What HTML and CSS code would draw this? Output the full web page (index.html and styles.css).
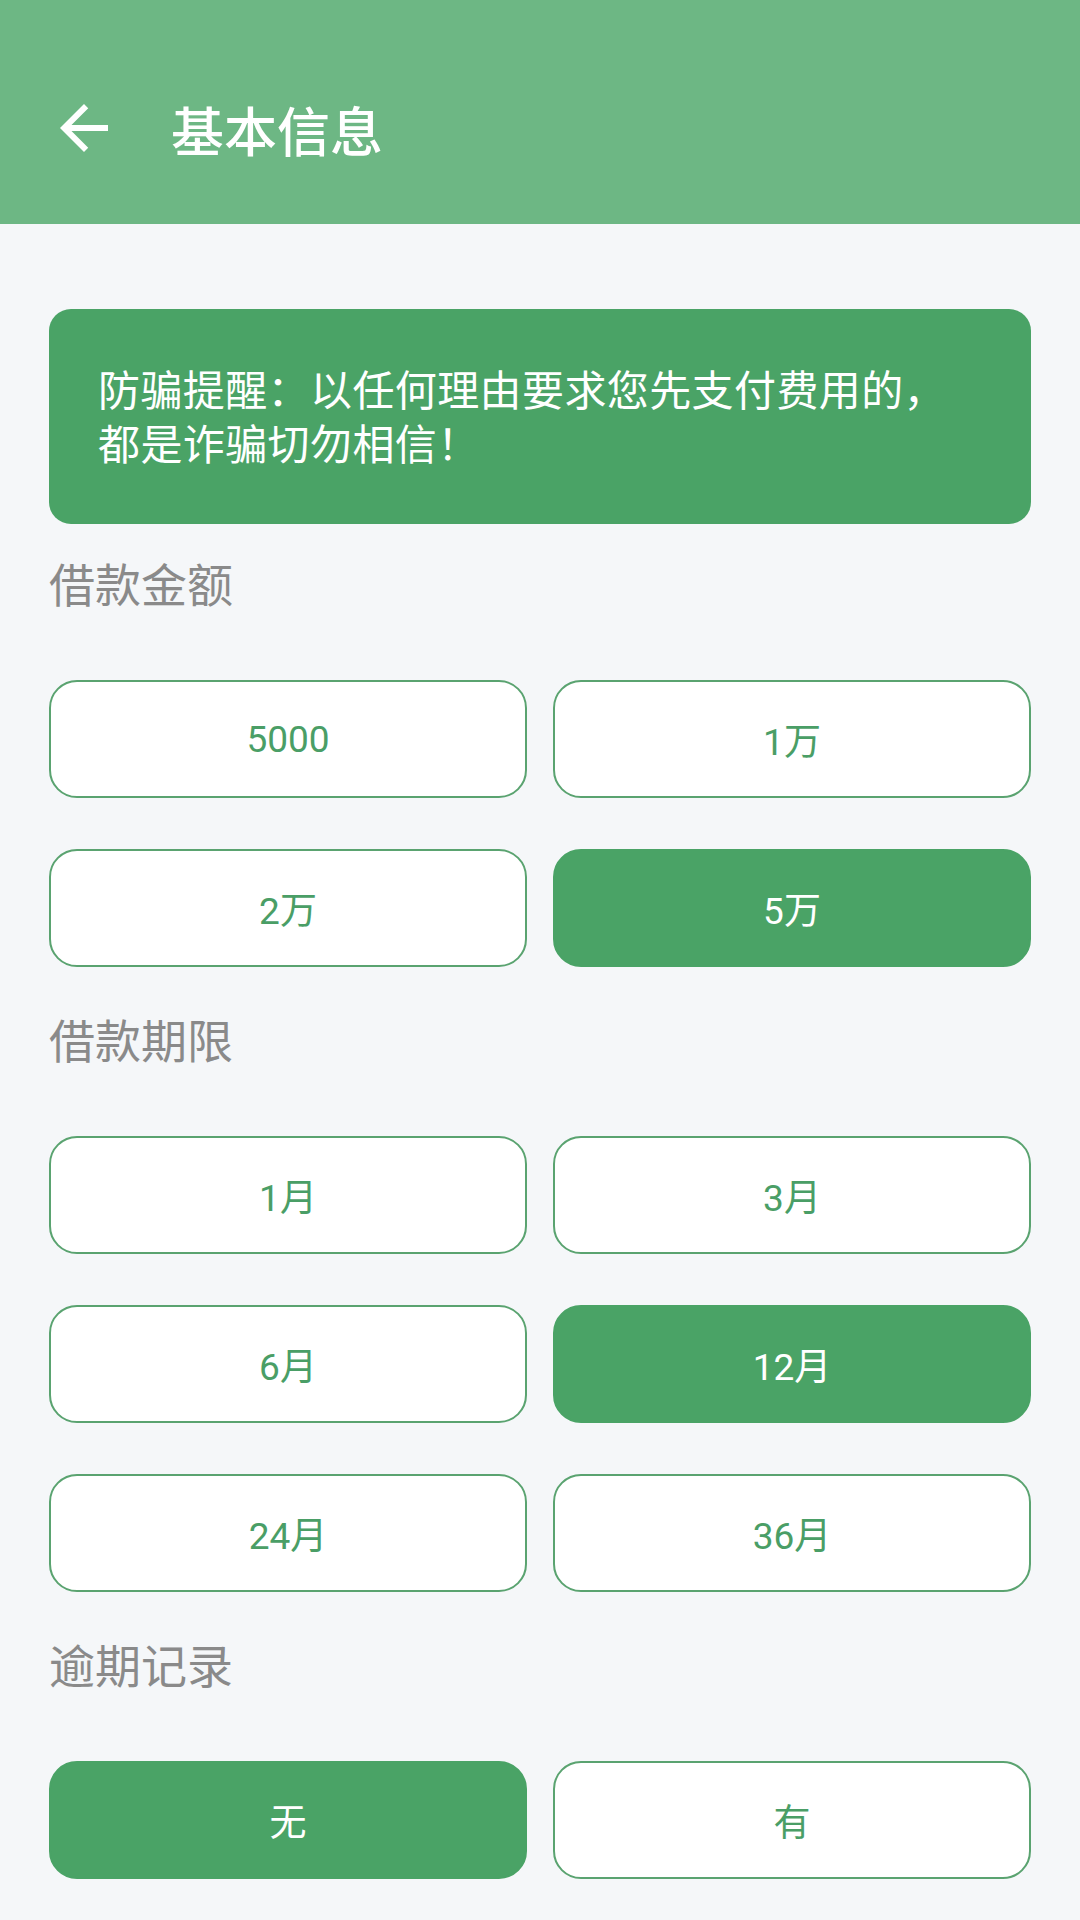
FILE: index.html
```html
<!DOCTYPE html>
<html lang="zh-CN">
<head>
<meta charset="utf-8">
<title>基本信息</title>
<link rel="stylesheet" href="styles.css">
</head>
<body>
<header class="topbar">
  <span class="back">
    <svg viewBox="0 0 24 24" width="72" height="72"><path fill="#ffffff" d="M20 11H7.83l5.59-5.59L12 4l-8 8 8 8 1.41-1.41L7.83 13H20v-2z"/></svg>
  </span>
  <h1 class="title">基本信息</h1>
</header>
<main class="content">
  <div class="notice">防骗提醒：以任何理由要求您先支付费用的，都是诈骗切勿相信！</div>

  <section class="group first">
    <div class="label">借款金额</div>
    <div class="options">
      <div class="opt">5000</div>
      <div class="opt">1万</div>
      <div class="opt">2万</div>
      <div class="opt on">5万</div>
    </div>
  </section>

  <section class="group">
    <div class="label">借款期限</div>
    <div class="options">
      <div class="opt">1月</div>
      <div class="opt">3月</div>
      <div class="opt">6月</div>
      <div class="opt on">12月</div>
      <div class="opt">24月</div>
      <div class="opt">36月</div>
    </div>
  </section>

  <section class="group">
    <div class="label">逾期记录</div>
    <div class="options">
      <div class="opt on">无</div>
      <div class="opt">有</div>
    </div>
  </section>
</main>
</body>
</html>
```
FILE: styles.css
```css
html, body {
  margin: 0;
  padding: 0;
}
body {
  width: 1080px;
  min-height: 1920px;
  background: #f5f7f9;
  font-family: Roboto, "Noto Sans CJK SC", sans-serif;
}
.topbar {
  height: 224px;
  background: #6db784;
  display: flex;
  align-items: flex-start;
  padding-left: 48px;
  box-sizing: border-box;
}
.back {
  display: flex;
  width: 72px;
  height: 72px;
  margin-top: 92px;
}
.title {
  margin: 103px 0 0 51px;
  font-family: "Noto Sans CJK SC", sans-serif;
  font-size: 53px;
  font-weight: 500;
  color: #ffffff;
  line-height: 53px;
}
.content {
  padding: 85px 49px 0;
}
.notice {
  background: #4aa366;
  border-radius: 22px;
  color: #ffffff;
  font-family: "Noto Sans CJK SC", sans-serif;
  font-size: 42px;
  letter-spacing: 0.4px;
  line-height: 54px;
  padding: 52px 60px 55px 49px;
}
.group {
  margin-top: 40px;
}
.group.first {
  margin-top: 27px;
}
.label {
  font-family: "Noto Sans CJK SC", sans-serif;
  font-size: 46px;
  line-height: 62px;
  color: #8a8a8a;
  margin-bottom: 67px;
}
.options {
  display: grid;
  grid-template-columns: 1fr 1fr;
  column-gap: 26px;
  row-gap: 51px;
}
.opt {
  height: 118px;
  box-sizing: border-box;
  border: 2.5px solid #5aa370;
  border-radius: 28px;
  background: #ffffff;
  color: #4a9e66;
  font-size: 37px;
  display: flex;
  align-items: center;
  justify-content: center;
}
.opt.on {
  background: #4aa366;
  border-color: #4aa366;
  color: #ffffff;
}
```
